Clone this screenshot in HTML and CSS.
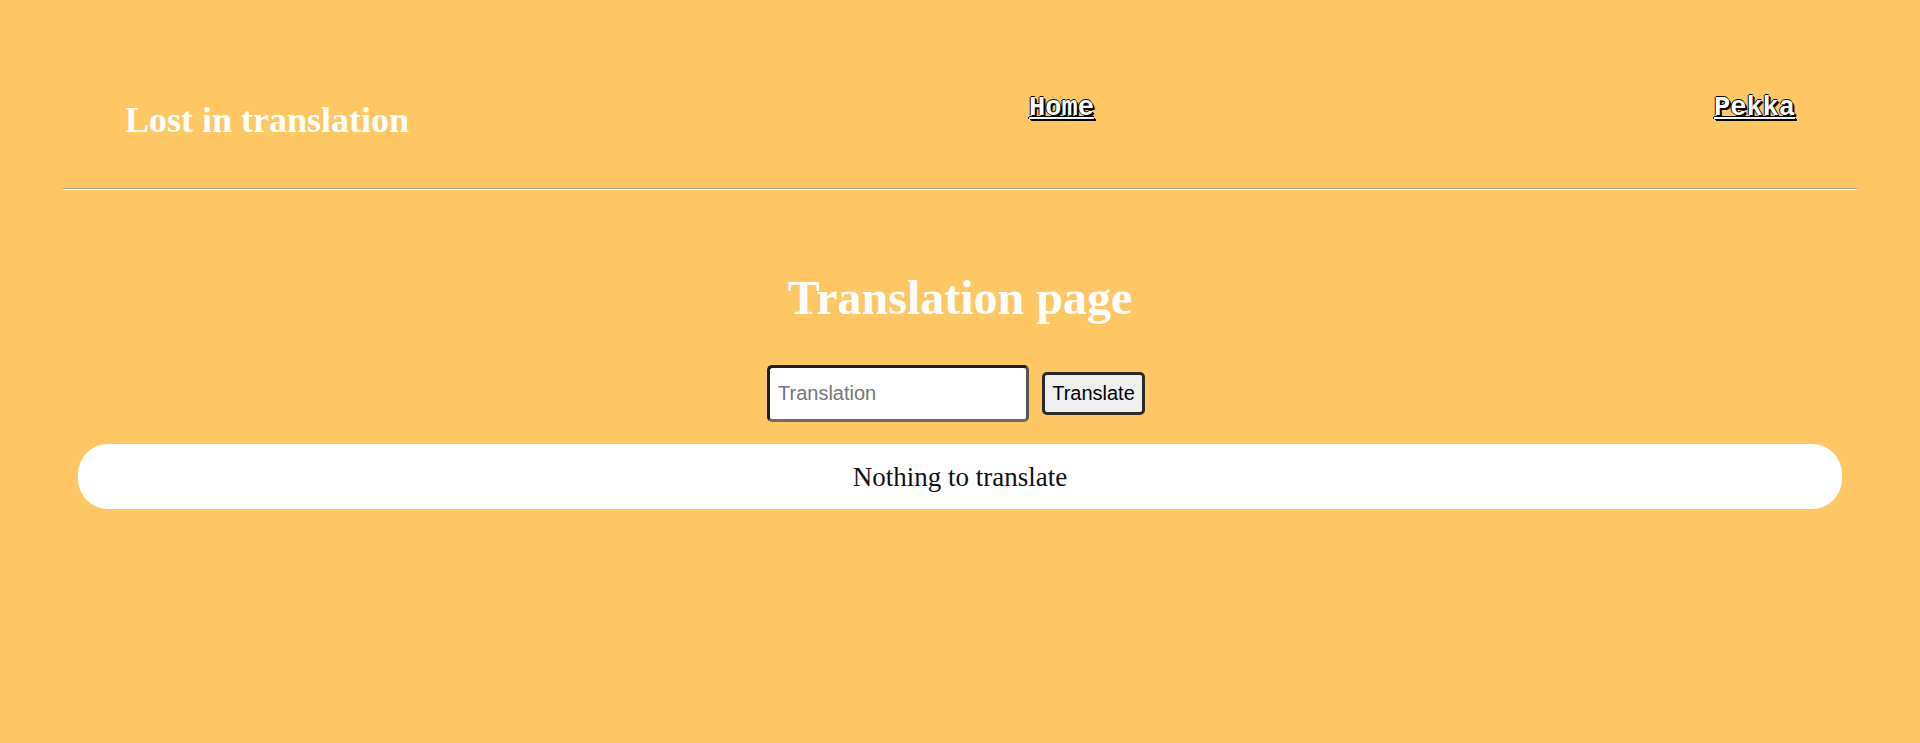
FILE: index.html
```html
<!DOCTYPE html>
<html>
<head>
<meta charset="utf-8">
<title>Lost in translation</title>
<link rel="stylesheet" href="styles.css">
</head>
<body>
<div class="page">
  <header class="header">
    <h2 class="brand">Lost in translation</h2>
    <a class="nav-link" href="#">Home</a>
    <a class="nav-link" href="#">Pekka</a>
  </header>
  <hr class="divider">
  <main class="main">
    <h1 class="title">Translation page</h1>
    <form class="form">
      <input class="input" type="text" placeholder="Translation">
      <button class="button" type="button">Translate</button>
    </form>
    <div class="result">Nothing to translate</div>
  </main>
</div>
</body>
</html>
```

FILE: styles.css
```css
html, body {
  margin: 0;
  padding: 0;
  background: #fec763;
  height: 100%;
}
body {
  font-family: "Liberation Serif", "Times New Roman", serif;
}
.page {
  padding: 0 63px;
}
.header {
  display: flex;
  justify-content: space-between;
  align-items: flex-start;
  height: 188px;
  box-sizing: border-box;
  padding: 93px 62px 0;
}
.brand {
  margin: 7px 0 0;
  font-size: 36px;
  line-height: 40px;
  font-weight: bold;
  color: #fff;
}
.nav-link {
  font-family: "Courier New", "Liberation Mono", monospace;
  font-weight: bold;
  font-size: 27px;
  line-height: 30px;
  color: #fff;
  text-decoration: underline;
  text-shadow: 1px 1px 0 #000, 2px 2px 0 #000, -1px 0 0 #000, 0 -1px 0 #000;
}
.divider {
  margin: 0;
  height: 0;
  border: 0;
  border-top: 1px solid #9b9b9b;
  border-bottom: 1px solid #fff3dc;
}
.main {
  padding-top: 80px;
}
.title {
  margin: 0;
  text-align: center;
  font-size: 48px;
  line-height: 56px;
  font-weight: bold;
  color: #fff;
}
.form {
  display: flex;
  justify-content: center;
  align-items: center;
  gap: 13px;
  margin: 39px 0 0;
  padding-right: 8px;
}
.input {
  width: 262px;
  height: 57px;
  box-sizing: border-box;
  border: 3px solid #1e1e1e;
  border-bottom-color: #6b6b6b;
  border-right-color: #555;
  border-radius: 5px;
  padding: 0 8px;
  font-family: "Liberation Sans", Arial, sans-serif;
  font-size: 20px;
  background: #fff;
  outline: none;
}
.input::placeholder {
  color: #757575;
}
.button {
  width: 103px;
  height: 43px;
  box-sizing: border-box;
  border: 3px solid #2a2a2a;
  border-radius: 5px;
  background: #efefef;
  font-family: "Liberation Sans", Arial, sans-serif;
  font-size: 20px;
  color: #000;
  padding: 0;
}
.result {
  margin: 22px 15px 0;
  height: 65px;
  background: #fff;
  border-radius: 30px;
  display: flex;
  align-items: center;
  justify-content: center;
  font-size: 27px;
  color: #111;
  padding-top: 2px;
  box-sizing: border-box;
}
```
